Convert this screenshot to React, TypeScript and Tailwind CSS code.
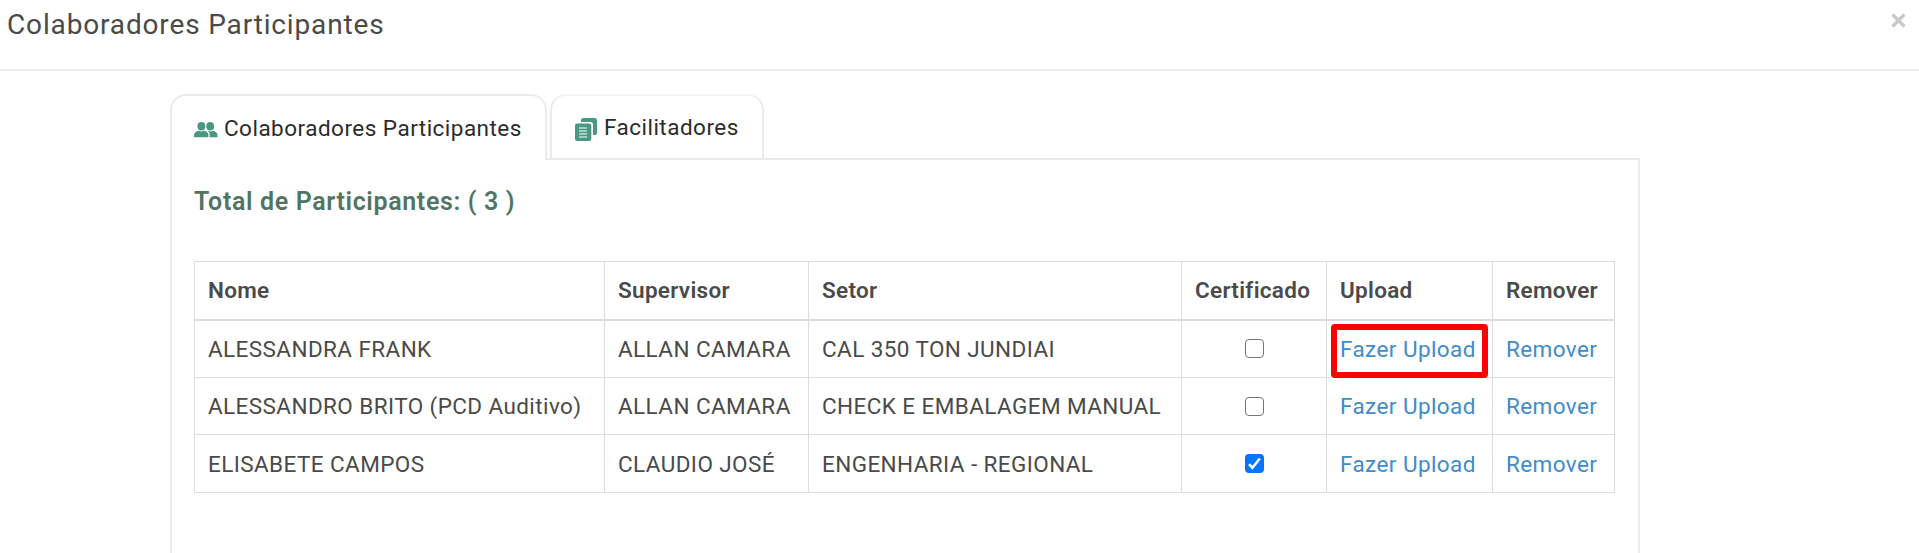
import React from 'react';
import clsx from 'clsx';

interface Participant {
  name: string;
  supervisor: string;
  sector: string;
  certified: boolean;
  highlighted?: boolean;
}

const participants: Participant[] = [
  {
    name: 'ALESSANDRA FRANK',
    supervisor: 'ALLAN CAMARA',
    sector: 'CAL 350 TON JUNDIAI',
    certified: false,
    highlighted: true,
  },
  {
    name: 'ALESSANDRO BRITO (PCD Auditivo)',
    supervisor: 'ALLAN CAMARA',
    sector: 'CHECK E EMBALAGEM MANUAL',
    certified: false,
  },
  {
    name: 'ELISABETE CAMPOS',
    supervisor: 'CLAUDIO JOSÉ',
    sector: 'ENGENHARIA - REGIONAL',
    certified: true,
  },
];

const columns = ['Nome', 'Supervisor', 'Setor', 'Certificado', 'Upload', 'Remover'];

const PeopleIcon = () => (
  <svg width="24" height="16" viewBox="0 0 24 16" fill="#4a9882">
    <ellipse cx="7.4" cy="4.3" rx="3.9" ry="4.3" />
    <path d="M0 15.3v-2.3c0-2.2 2.2-3.6 4.9-4.2 1.5 1 3.5 1 5 0 2.7.6 4.6 2 4.6 4.2v2.3z" />
    <ellipse cx="16.2" cy="4.3" rx="3.9" ry="4.3" />
    <path d="M15.7 15.3v-2.3c0-1.7-.8-3-2.1-3.9l.5-.3c1.4 1 3.2 1 4.6 0 2.7.6 4.8 2 4.8 4.2v2.3z" />
  </svg>
);

const DocumentsIcon = () => (
  <svg width="22" height="24" viewBox="0 0 22 24" fill="#4a9882">
    <path d="M6 2.5A2.5 2.5 0 0 1 8.5 0h11A2.5 2.5 0 0 1 22 2.5v12.5a2 2 0 0 1-2 2h-2V6.5A2.5 2.5 0 0 0 15.5 4H6z" />
    <rect y="5.5" width="16.3" height="17.5" rx="2" />
    <path
      d="M4 10h8M4 13h8M4 16h8M4 19h8"
      stroke="white"
      strokeWidth="1.2"
    />
  </svg>
);

const Checkbox = ({ checked }: { checked: boolean }) => (
  <span
    role="checkbox"
    aria-checked={checked}
    className={clsx(
      'mx-auto flex h-[19px] w-[19px] items-center justify-center rounded-[4px]',
      checked ? 'bg-[#0075ff]' : 'border-[1.5px] border-[#767676] bg-white'
    )}
  >
    {checked && (
      <svg width="15" height="15" viewBox="0 0 15 15" fill="none">
        <path d="M2 8.2l3.4 3.5L12.8 2.5" stroke="white" strokeWidth="2.6" />
      </svg>
    )}
  </span>
);

const ParticipantRow = ({
  name,
  supervisor,
  sector,
  certified,
  highlighted,
}: Participant) => (
  <tr className="h-[57.7px] [&>td]:border [&>td]:border-[#ddd] [&>td]:pl-[13px]">
    <td>{name}</td>
    <td>{supervisor}</td>
    <td>{sector}</td>
    <td className="pr-[13px]">
      <Checkbox checked={certified} />
    </td>
    <td className="relative text-[#428bca]">
      <a href="#">Fazer Upload</a>
      {highlighted && (
        <span className="absolute top-[3px] left-[4px] h-[54px] w-[157px] rounded-[4px] border-6 border-[#ff0000]" />
      )}
    </td>
    <td className="text-[#428bca]">
      <a href="#">Remover</a>
    </td>
  </tr>
);

const App = () => {
  return (
    <div className="h-[553px] overflow-hidden bg-white font-[Roboto,sans-serif] whitespace-nowrap text-[#333]">
      <header className="flex h-[71px] items-start justify-between border-b-2 border-[#ebebeb] pr-[13px] pl-[7px]">
        <h4 className="mt-[5px] text-[28px] leading-[40px] tracking-[0.85px] text-[#4a4a4a]">
          Colaboradores Participantes
        </h4>
        <button className="mt-[13px]" aria-label="Fechar">
          <svg width="15" height="15" viewBox="0 0 15 15">
            <path d="M1.5 1.5l12 12M13.5 1.5l-12 12" stroke="#c8c8c8" strokeWidth="3.2" />
          </svg>
        </button>
      </header>

      <main className="ml-[170px] w-[1470px] pt-[23px]">
        <nav className="flex h-[66px] text-[22.5px] tracking-[0.48px] text-[#2b2b2b]">
          <div className="flex w-[377px] items-center gap-[6px] rounded-t-[16px] border-x-2 border-t-2 border-[#ebebeb] pl-[22px]">
            <span className="mt-[3px]">
              <PeopleIcon />
            </span>
            <span className="mt-[1px]">Colaboradores Participantes</span>
          </div>
          <div className="w-[3px] border-b-2 border-[#e8e8e8]" />
          <div className="flex w-[214px] items-center gap-[7px] rounded-t-[16px] border-2 border-[#ebebeb] border-t-[#f3f3f3] pl-[23px]">
            <span className="mt-[5px]">
              <DocumentsIcon />
            </span>
            <span className="mt-[2px]">Facilitadores</span>
          </div>
          <div className="flex-1 border-b-2 border-[#e8e8e8]" />
        </nav>

        <section className="h-[420px] border-x-2 border-[#ebebeb] pt-[22px] pl-[22px]">
          <h3 className="text-[25px] leading-[40px] font-semibold tracking-[0.64px] text-[#527563]">
            Total de Participantes: ( 3 )
          </h3>
          <table className="mt-[39px] w-[1421px] table-fixed border-collapse text-[22.5px] leading-[30px] tracking-[0.41px] text-[#4a4a4a]">
            <colgroup>
              <col className="w-[410px]" />
              <col className="w-[204px]" />
              <col className="w-[373px]" />
              <col className="w-[145px]" />
              <col className="w-[166px]" />
              <col className="w-[122px]" />
            </colgroup>
            <thead>
              <tr className="h-[58px]">
                {columns.map((column) => (
                  <th
                    key={column}
                    className="border border-b-2 border-[#ddd] pl-[13px] text-left font-semibold tracking-[0.3px]"
                  >
                    {column}
                  </th>
                ))}
              </tr>
            </thead>
            <tbody>
              {participants.map((participant) => (
                <ParticipantRow key={participant.name} {...participant} />
              ))}
            </tbody>
          </table>
        </section>
      </main>
    </div>
  );
};

export default App;
